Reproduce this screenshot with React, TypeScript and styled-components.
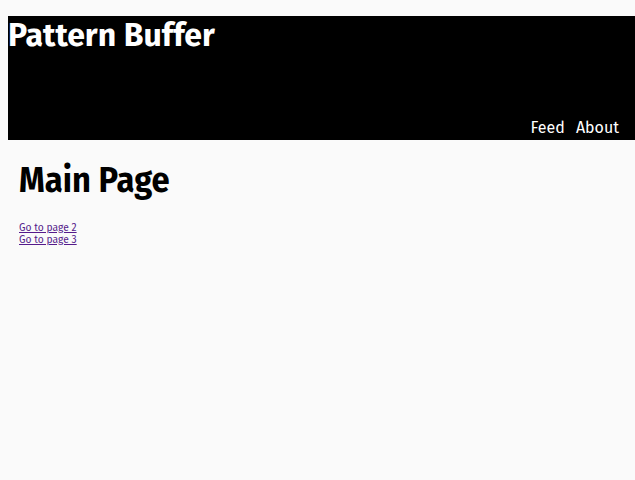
import React from "react";
import styled, { createGlobalStyle } from "styled-components";

const Global = createGlobalStyle`
  html { background: #fafafa; }
  body {
    margin: 16px 0 8px 8px;
    background: #fafafa;
    font-family: "Fira Sans", "Open Sans", "DejaVu Sans", sans-serif;
  }
`;

const Page = styled.div`
  display: flex;
  flex-direction: column;
`;

const Header = styled.header`
  background: #000;
  color: #fff;
  height: 124px;
  display: flex;
  flex-direction: column;
  justify-content: space-between;
`;

const Title = styled.h1`
  margin: 0;
  font-size: 32px;
  font-weight: 700;
  line-height: 38px;
`;

const Nav = styled.nav`
  display: flex;
  justify-content: flex-end;
  gap: 11px;
  padding: 0 16px 2px 0;
  font-size: 16px;
  line-height: 20px;
`;

const NavItem = styled.span`
  color: #fff;
`;

const Main = styled.main`
  padding: 0 19px 0 11px;
`;

const Heading = styled.h2`
  margin: 20px 0 22px;
  font-size: 36px;
  font-weight: 700;
  line-height: 40px;
  width: fit-content;
  transform: scaleX(0.91);
  transform-origin: left center;
`;

const LinkLine = styled.a`
  display: block;
  font-size: 11px;
  line-height: 12px;
  color: #551a8b;
  width: fit-content;
  transform: scaleX(0.935);
  transform-origin: left center;
`;

export default function App() {
  return (
    <Page>
      <Global />
      <Header>
        <Title>Pattern Buffer</Title>
        <Nav>
          <NavItem>Feed</NavItem>
          <NavItem>About</NavItem>
        </Nav>
      </Header>
      <Main>
        <Heading>Main Page</Heading>
        <LinkLine href="#">Go to page 2</LinkLine>
        <LinkLine href="#">Go to page 3</LinkLine>
      </Main>
    </Page>
  );
}
